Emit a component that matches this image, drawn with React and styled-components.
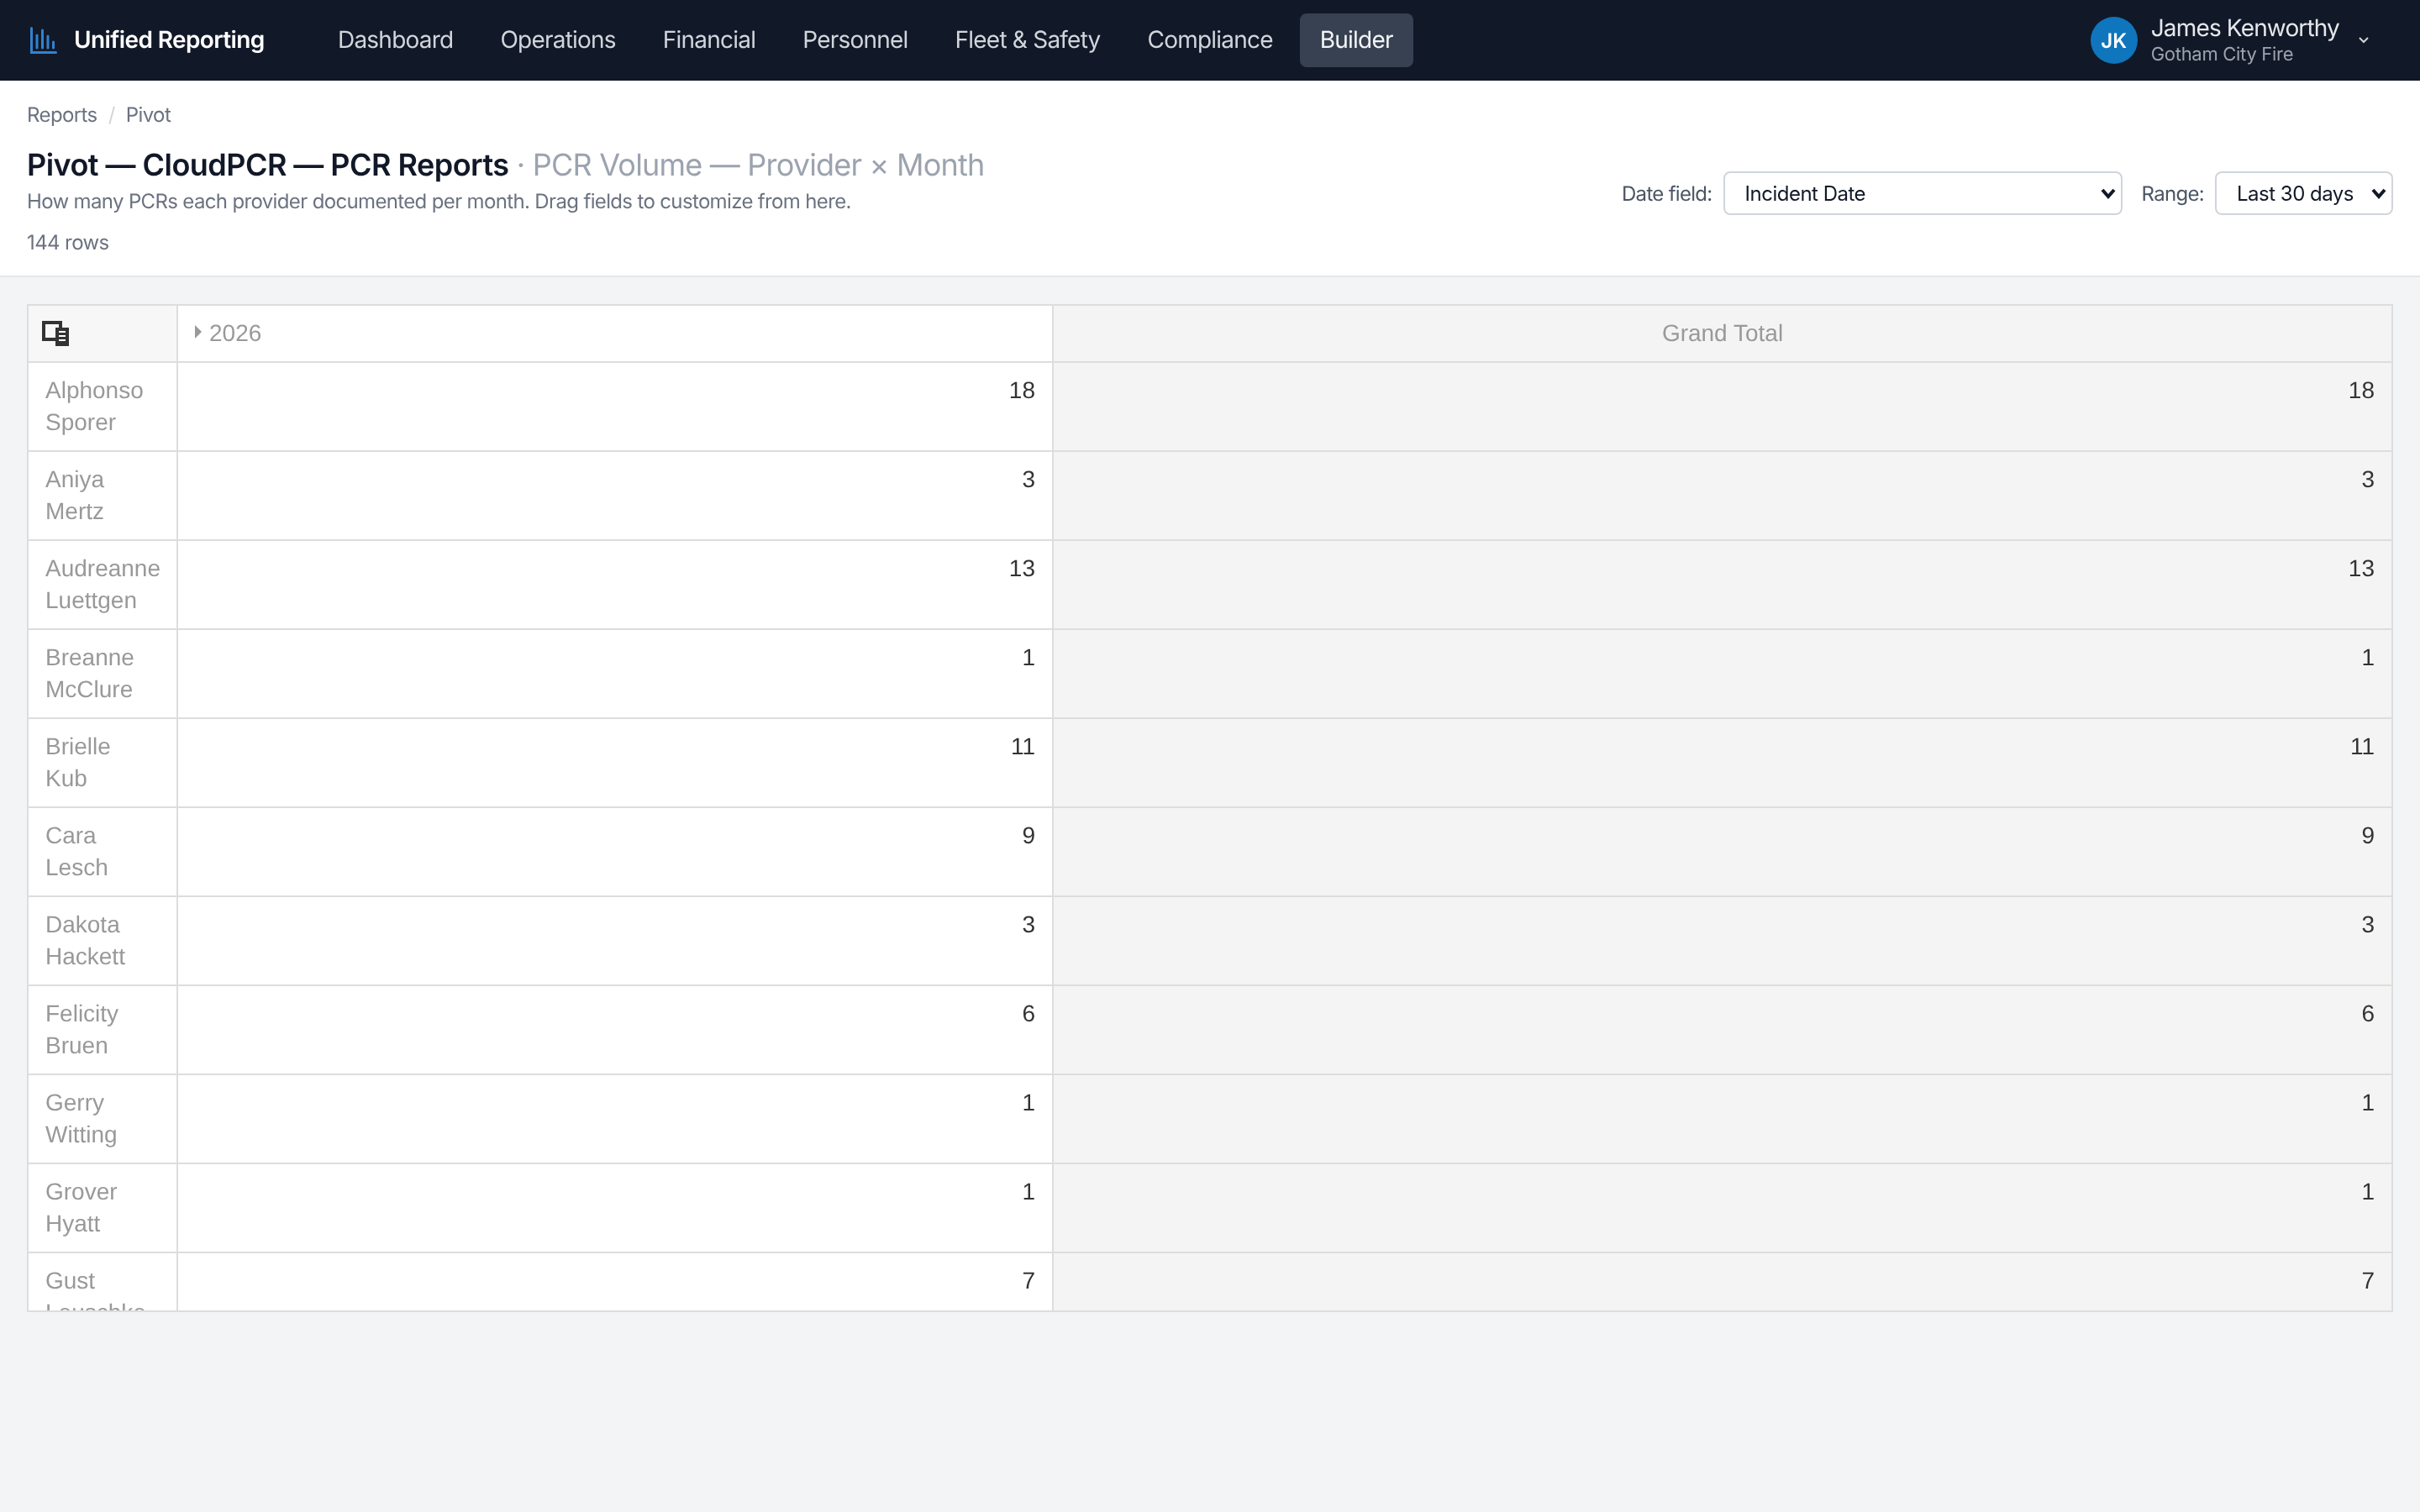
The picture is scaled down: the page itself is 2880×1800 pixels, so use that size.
import styled, { createGlobalStyle } from "styled-components";

const GlobalStyle = createGlobalStyle`
  * {
    box-sizing: border-box;
  }
  html, body {
    margin: 0;
    padding: 0;
    height: 100%;
    background-color: #f3f4f6;
    font-family: Inter, "Noto Sans", sans-serif;
    text-rendering: geometricPrecision;
  }
`;

const Page = styled.div`
  min-height: 1800px;
  display: flex;
  flex-direction: column;
  background-color: #f3f4f6;
  will-change: transform;
`;

const Navbar = styled.nav`
  height: 96px;
  display: flex;
  align-items: center;
  padding: 0 60px 0 36px;
  background-color: #111827;
`;

const Brand = styled.div`
  display: flex;
  align-items: center;
  gap: 20px;
  width: 342px;
  color: #ffffff;
  font-size: 28px;
  font-weight: 600;
  letter-spacing: -0.6px;
`;

const BrandName = styled.span`
  padding-bottom: 2px;
`;

const NavLinks = styled.div`
  display: flex;
  gap: 8px;
  flex: 1;
`;

const NavLink = styled.a`
  padding: 0 24px 2px;
  height: 64px;
  display: flex;
  align-items: center;
  border-radius: 8px;
  font-size: 28px;
  letter-spacing: -0.78px;
  color: ${(p) => (p.$active ? "#f3f4f6" : "#d1d5db")};
  background-color: ${(p) => (p.$active ? "#374151" : "transparent")};
`;

const UserMenu = styled.div`
  display: flex;
  align-items: center;
  gap: 16px;
`;

const Avatar = styled.div`
  width: 56px;
  height: 56px;
  border-radius: 50%;
  display: flex;
  align-items: center;
  justify-content: center;
  background-color: #0f75bc;
  color: #ffffff;
  font-size: 24px;
  font-weight: 600;
`;

const UserText = styled.div`
  display: flex;
  flex-direction: column;
  margin-right: 6px;
`;

const UserName = styled.span`
  margin-bottom: 2px;
  font-size: 28px;
  line-height: 32px;
  letter-spacing: -0.85px;
  color: #e5e7eb;
`;

const UserOrg = styled.span`
  font-size: 22px;
  line-height: 28px;
  letter-spacing: -0.3px;
  color: #9ca3af;
`;

const PageHeader = styled.header`
  height: 234px;
  padding: 24px 32px 0;
  background-color: #ffffff;
  border-bottom: 2px solid #e5e7eb;
`;

const Breadcrumb = styled.div`
  display: flex;
  gap: 13px;
  height: 32px;
  align-items: center;
  font-size: 24px;
  letter-spacing: -0.6px;
  color: #6b7280;
`;

const Slash = styled.span`
  color: #d1d5db;
`;

const HeaderRow = styled.div`
  display: flex;
  justify-content: space-between;
  margin-top: 20px;
`;

const TitleBlock = styled.div`
  display: flex;
  flex-direction: column;
`;

const Title = styled.h1`
  margin: 0;
  font-size: 36px;
  line-height: 48px;
  font-weight: 600;
  letter-spacing: -0.54px;
  color: #111827;
`;

const TitleNote = styled.span`
  font-weight: 400;
  letter-spacing: -0.8px;
  color: #9ca3af;
`;

const Description = styled.p`
  margin: 0;
  font-size: 24px;
  line-height: 40px;
  letter-spacing: -0.65px;
  color: #6b7280;
`;

const RowCount = styled.div`
  margin-top: 9px;
  font-size: 24px;
  line-height: 40px;
  letter-spacing: -0.6px;
  color: #6b7280;
`;

const Controls = styled.div`
  display: flex;
  align-items: center;
  gap: 23px;
  margin-top: 32px;
  height: 52px;
`;

const ControlGroup = styled.label`
  display: flex;
  align-items: center;
  gap: 13px;
  font-size: 24px;
  letter-spacing: -0.7px;
  color: #4b5563;
`;

const SelectWrap = styled.div`
  position: relative;
  width: ${(p) => p.$width}px;
`;

const Select = styled.select`
  appearance: none;
  width: 100%;
  height: 52px;
  padding: 0 40px 0 24px;
  border: 2px solid #d1d5db;
  border-radius: 8px;
  background-color: #ffffff;
  font-family: inherit;
  font-size: 24px;
  letter-spacing: -0.5px;
  color: #111827;
`;

const SelectArrow = styled.svg`
  position: absolute;
  top: 19px;
  right: 8px;
  width: 18px;
  height: 14px;
  pointer-events: none;
`;

const Content = styled.main`
  padding: 32px;
`;

const PivotWrap = styled.div`
  height: 1200px;
  overflow: hidden;
  background-color: #ffffff;
  border: solid #dddddd;
  border-width: 2px 0 2px 2px;
`;

const PivotTable = styled.table`
  width: 2814px;
  table-layout: fixed;
  border-collapse: separate;
  border-spacing: 0;
  font-family: "Liberation Sans", Arial, sans-serif;
  font-size: 28px;
  line-height: 38px;
`;

const Cell = styled.td`
  padding: 14px 20px;
  vertical-align: top;
  border-right: 2px solid #dddddd;
  border-bottom: 2px solid #dddddd;
`;

const CornerCell = styled(Cell).attrs({ as: "th" })`
  background-color: #f7f7f7;
  text-align: left;
  font-weight: 400;
`;

const YearCell = styled(Cell).attrs({ as: "th" })`
  text-align: left;
  font-weight: 400;
  color: #999999;
`;

const YearInner = styled.span`
  display: flex;
  align-items: center;
  gap: 9px;
`;

const Caret = styled.span`
  width: 0;
  height: 0;
  margin-bottom: 5px;
  border-style: solid;
  border-width: 8px 0 8px 8px;
  border-color: transparent transparent transparent #999999;
`;

const GrandHeader = styled(Cell).attrs({ as: "th" })`
  background-color: #f4f4f4;
  text-align: center;
  font-weight: 400;
  color: #999999;
`;

const RowLabel = styled(Cell)`
  color: #999999;
`;

const Value = styled(Cell)`
  text-align: right;
  color: #333333;
  background-color: ${(p) => (p.$total ? "#f4f4f4" : "#ffffff")};
`;

const CornerIcon = styled.svg`
  display: block;
  width: 36px;
  height: 38px;
  margin-left: -4px;
`;

const providers = [
  ["Alphonso", "Sporer", 18],
  ["Aniya", "Mertz", 3],
  ["Audreanne", "Luettgen", 13],
  ["Breanne", "McClure", 1],
  ["Brielle", "Kub", 11],
  ["Cara", "Lesch", 9],
  ["Dakota", "Hackett", 3],
  ["Felicity", "Bruen", 6],
  ["Gerry", "Witting", 1],
  ["Grover", "Hyatt", 1],
  ["Gust", "Leuschke", 7],
];

const navItems = ["Dashboard", "Operations", "Financial", "Personnel", "Fleet & Safety", "Compliance", "Builder"];

function Chevron() {
  return (
    <SelectArrow viewBox="0 0 18 14">
      <path d="M2 3l7 8 7-8" fill="none" stroke="#111827" strokeWidth="4" />
    </SelectArrow>
  );
}

export default function App() {
  return (
    <Page>
      <GlobalStyle />
      <Navbar>
        <Brand>
          <svg width="32" height="32" viewBox="0 0 32 32" fill="none" stroke="#3182ce" strokeWidth="3" strokeLinecap="round">
            <path d="M1.5 1.5V30.5H30.5" />
            <path d="M8 10V25M14.5 4V25M21 11V25M27.5 18V25" />
          </svg>
          <BrandName>Unified Reporting</BrandName>
        </Brand>
        <NavLinks>
          {navItems.map((item) => (
            <NavLink key={item} $active={item === "Builder"}>{item}</NavLink>
          ))}
        </NavLinks>
        <UserMenu>
          <Avatar>JK</Avatar>
          <UserText>
            <UserName>James Kenworthy</UserName>
            <UserOrg>Gotham City Fire</UserOrg>
          </UserText>
          <svg width="14" height="10" viewBox="0 0 14 10" fill="none" stroke="#d1d5db" strokeWidth="2">
            <path d="M2 2l5 5 5-5" />
          </svg>
        </UserMenu>
      </Navbar>

      <PageHeader>
        <Breadcrumb>
          <span>Reports</span>
          <Slash>/</Slash>
          <span>Pivot</span>
        </Breadcrumb>
        <HeaderRow>
          <TitleBlock>
            <Title>
              Pivot — CloudPCR — PCR Reports<TitleNote> · PCR Volume — Provider × Month</TitleNote>
            </Title>
            <Description>How many PCRs each provider documented per month. Drag fields to customize from here.</Description>
            <RowCount>144 rows</RowCount>
          </TitleBlock>
          <Controls>
            <ControlGroup>
              Date field:
              <SelectWrap $width={475}>
                <Select defaultValue="incident">
                  <option value="incident">Incident Date</option>
                </Select>
                <Chevron />
              </SelectWrap>
            </ControlGroup>
            <ControlGroup>
              Range:
              <SelectWrap $width={212}>
                <Select defaultValue="30">
                  <option value="30">Last 30 days</option>
                </Select>
                <Chevron />
              </SelectWrap>
            </ControlGroup>
          </Controls>
        </HeaderRow>
      </PageHeader>

      <Content>
        <PivotWrap>
          <PivotTable>
            <colgroup>
              <col style={{ width: 178 }} />
              <col style={{ width: 1042 }} />
              <col />
            </colgroup>
            <thead>
              <tr>
                <CornerCell>
                  <CornerIcon viewBox="0 0 36 38">
                    <path d="M2 6H22V26H2Z" fill="none" stroke="#333333" strokeWidth="4" />
                    <path d="M16 12H32V34H16Z" fill="#333333" />
                    <path d="M20 17H28M20 22H28M20 27H28" stroke="#ffffff" strokeWidth="2" />
                  </CornerIcon>
                </CornerCell>
                <YearCell>
                  <YearInner>
                    <Caret />
                    2026
                  </YearInner>
                </YearCell>
                <GrandHeader>Grand Total</GrandHeader>
              </tr>
            </thead>
            <tbody>
              {providers.map(([first, last, count]) => (
                <tr key={first}>
                  <RowLabel>{first}<br />{last}</RowLabel>
                  <Value>{count}</Value>
                  <Value $total>{count}</Value>
                </tr>
              ))}
            </tbody>
          </PivotTable>
        </PivotWrap>
      </Content>
    </Page>
  );
}
